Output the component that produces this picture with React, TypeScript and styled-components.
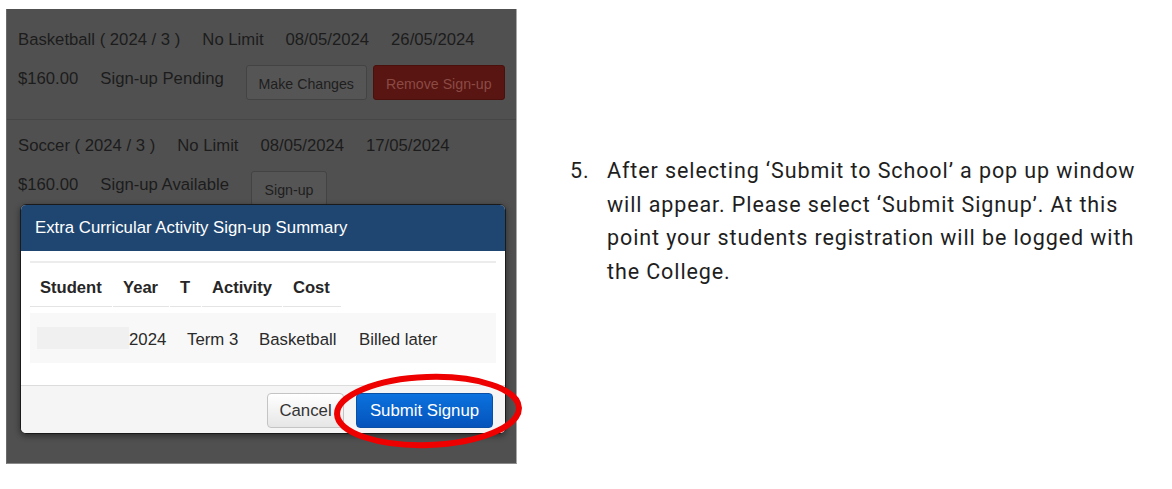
import React from "react";
import styled, { createGlobalStyle } from "styled-components";

const Global = createGlobalStyle`
  html, body { margin: 0; padding: 0; background: #ffffff; }
  body { font-family: "Liberation Sans", Arial, sans-serif; }
`;

const Page = styled.div`
  display: flex;
  align-items: flex-start;
  width: 1172px;
  height: 489px;
  overflow: hidden;
  padding: 9px 0 0 6px;
  box-sizing: border-box;
`;

const Shot = styled.div`
  position: relative;
  width: 511px;
  height: 455px;
  box-sizing: border-box;
  background: #505050;
  border-right: 1px solid #a8a8a8;
  border-bottom: 1px solid #8a8a8a;
  border-left: 1px solid #6a6a6a;
  font-family: "Liberation Sans", Arial, sans-serif;
  color: #1c1c1c;
`;

const Section = styled.div<{ $top: number; $divider?: boolean }>`
  display: flex;
  flex-direction: column;
  gap: 13px;
  padding: ${(p) => p.$top}px 11px 19px;
  border-bottom: ${(p) => (p.$divider ? "1px solid #464646" : "none")};
`;

const Row = styled.div<{ $tall?: boolean }>`
  display: flex;
  align-items: center;
  gap: 22px;
  height: ${(p) => (p.$tall ? 35 : 24)}px;
  font-size: 16.7px;
  white-space: nowrap;
`;

const Cell = styled.span<{ $lift?: boolean }>`
  padding-bottom: ${(p) => (p.$lift ? 7 : 0)}px;
`;

const ButtonPair = styled.span`
  display: flex;
  gap: 6px;
`;

const DimButton = styled.div<{ $danger?: boolean; $w: number }>`
  display: flex;
  align-items: center;
  justify-content: center;
  width: ${(p) => p.$w}px;
  height: 35px;
  box-sizing: border-box;
  border-radius: 3px;
  font-size: 14.2px;
  padding-top: 3px;
  background: ${(p) => (p.$danger ? "#581511" : "#555555")};
  border: 1px solid ${(p) => (p.$danger ? "#4a100c" : "#434343")};
  color: ${(p) => (p.$danger ? "#8c4a45" : "#1e1e1e")};
`;

const Modal = styled.div`
  position: absolute;
  left: 13px;
  top: 195px;
  width: 486px;
  height: 230px;
  box-sizing: border-box;
  display: flex;
  flex-direction: column;
  background: #ffffff;
  border: 1px solid #1a1a1a;
  border-radius: 6px;
  overflow: hidden;
  box-shadow: 0 2px 6px rgba(0, 0, 0, 0.45);
`;

const ModalHeader = styled.div`
  height: 46px;
  display: flex;
  align-items: center;
  padding-left: 14px;
  background: #1f4670;
  color: #ffffff;
  font-size: 16.8px;
`;

const ModalBody = styled.div`
  flex: 1;
  padding: 10px 9px 0;
`;

const Rule = styled.div`
  height: 2px;
  background: #ececec;
`;

const HeadRow = styled.div`
  display: flex;
  gap: 1px;
  height: 44px;
`;

const HeadCell = styled.div<{ $w: number }>`
  width: ${(p) => p.$w}px;
  box-sizing: border-box;
  padding: 0 0 8px 10px;
  display: flex;
  align-items: flex-end;
  font-weight: bold;
  font-size: 16.6px;
  color: #262626;
  border-bottom: 1px solid #e4e4e4;
`;

const DataRow = styled.div`
  margin-top: 6px;
  height: 50px;
  box-sizing: border-box;
  padding-top: 4px;
  display: flex;
  align-items: center;
  background: #f8f8f8;
  font-size: 16.8px;
  color: #2a2a2a;
`;

const DataCell = styled.div<{ $w: number }>`
  width: ${(p) => p.$w}px;
  white-space: nowrap;
`;

const Redacted = styled.div`
  width: 92px;
  height: 22px;
  margin: -4px 0 0 7px;
  background: #f0f0f0;
  flex: none;
`;

const ModalFooter = styled.div`
  height: 48px;
  box-sizing: border-box;
  display: flex;
  align-items: center;
  justify-content: flex-end;
  gap: 12px;
  padding: 1px 12px 0 0;
  background: #f5f5f5;
  border-top: 1px solid #dcdcdc;
`;

const FooterButton = styled.div<{ $primary?: boolean; $w: number }>`
  display: flex;
  align-items: center;
  justify-content: center;
  width: ${(p) => p.$w}px;
  height: 35px;
  box-sizing: border-box;
  border-radius: 4px;
  font-size: 16.8px;
  padding-top: 1px;
  color: ${(p) => (p.$primary ? "#ffffff" : "#333333")};
  background: ${(p) =>
    p.$primary
      ? "linear-gradient(#0b72de, #0553bb)"
      : "linear-gradient(#ffffff, #e6e6e6)"};
  border: 1px solid ${(p) => (p.$primary ? "#0a4fa6" : "#c4c4c4")};
`;

const Marker = styled.svg`
  position: absolute;
  left: 326px;
  top: 365px;
  overflow: visible;
`;

const Note = styled.ol`
  margin: 145px 0 0 53px;
  padding: 0;
  list-style: none;
  font-family: Roboto, "Noto Sans", sans-serif;
  font-size: 21.5px;
  letter-spacing: 0.9px;
  line-height: 33.7px;
  color: #1e1e1e;
`;

const NoteItem = styled.li`
  display: flex;
`;

const NoteNum = styled.span`
  width: 37px;
  flex: none;
`;

const NoteText = styled.span`
  width: 552px;
`;

export default function App() {
  return (
    <>
      <Global />
      <Page>
        <Shot>
          <Section $top={19} $divider>
            <Row>
              <Cell>Basketball ( 2024 / 3 )</Cell>
              <Cell>No Limit</Cell>
              <Cell>08/05/2024</Cell>
              <Cell>26/05/2024</Cell>
            </Row>
            <Row $tall>
              <Cell $lift>$160.00</Cell>
              <Cell $lift>Sign-up Pending</Cell>
              <ButtonPair>
                <DimButton $w={121}>Make Changes</DimButton>
                <DimButton $w={132} $danger>
                  Remove Sign-up
                </DimButton>
              </ButtonPair>
            </Row>
          </Section>
          <Section $top={14}>
            <Row>
              <Cell>Soccer ( 2024 / 3 )</Cell>
              <Cell>No Limit</Cell>
              <Cell>08/05/2024</Cell>
              <Cell>17/05/2024</Cell>
            </Row>
            <Row $tall>
              <Cell $lift>$160.00</Cell>
              <Cell $lift>Sign-up Available</Cell>
              <DimButton $w={76}>Sign-up</DimButton>
            </Row>
          </Section>

          <Modal>
            <ModalHeader>Extra Curricular Activity Sign-up Summary</ModalHeader>
            <ModalBody>
              <Rule />
              <HeadRow>
                <HeadCell $w={82}>Student</HeadCell>
                <HeadCell $w={56}>Year</HeadCell>
                <HeadCell $w={31}>T</HeadCell>
                <HeadCell $w={80}>Activity</HeadCell>
                <HeadCell $w={58}>Cost</HeadCell>
              </HeadRow>
              <DataRow>
                <Redacted />
                <DataCell $w={58}>2024</DataCell>
                <DataCell $w={72}>Term 3</DataCell>
                <DataCell $w={100}>Basketball</DataCell>
                <DataCell $w={100}>Billed later</DataCell>
              </DataRow>
            </ModalBody>
            <ModalFooter>
              <FooterButton $w={77}>Cancel</FooterButton>
              <FooterButton $w={137} $primary>
                Submit Signup
              </FooterButton>
            </ModalFooter>
          </Modal>

          <Marker width="190" height="74" viewBox="0 0 190 74">
            <ellipse
              cx="95"
              cy="37"
              rx="91"
              ry="34"
              fill="none"
              stroke="#ee0000"
              strokeWidth="6"
              transform="rotate(-2 95 37)"
            />
          </Marker>
        </Shot>

        <Note>
          <NoteItem>
            <NoteNum>5.</NoteNum>
            <NoteText>
              After selecting ‘Submit to School’ a pop up window will appear.
              Please select ‘Submit Signup’. At this point your students
              registration will be logged with the College.
            </NoteText>
          </NoteItem>
        </Note>
      </Page>
    </>
  );
}
